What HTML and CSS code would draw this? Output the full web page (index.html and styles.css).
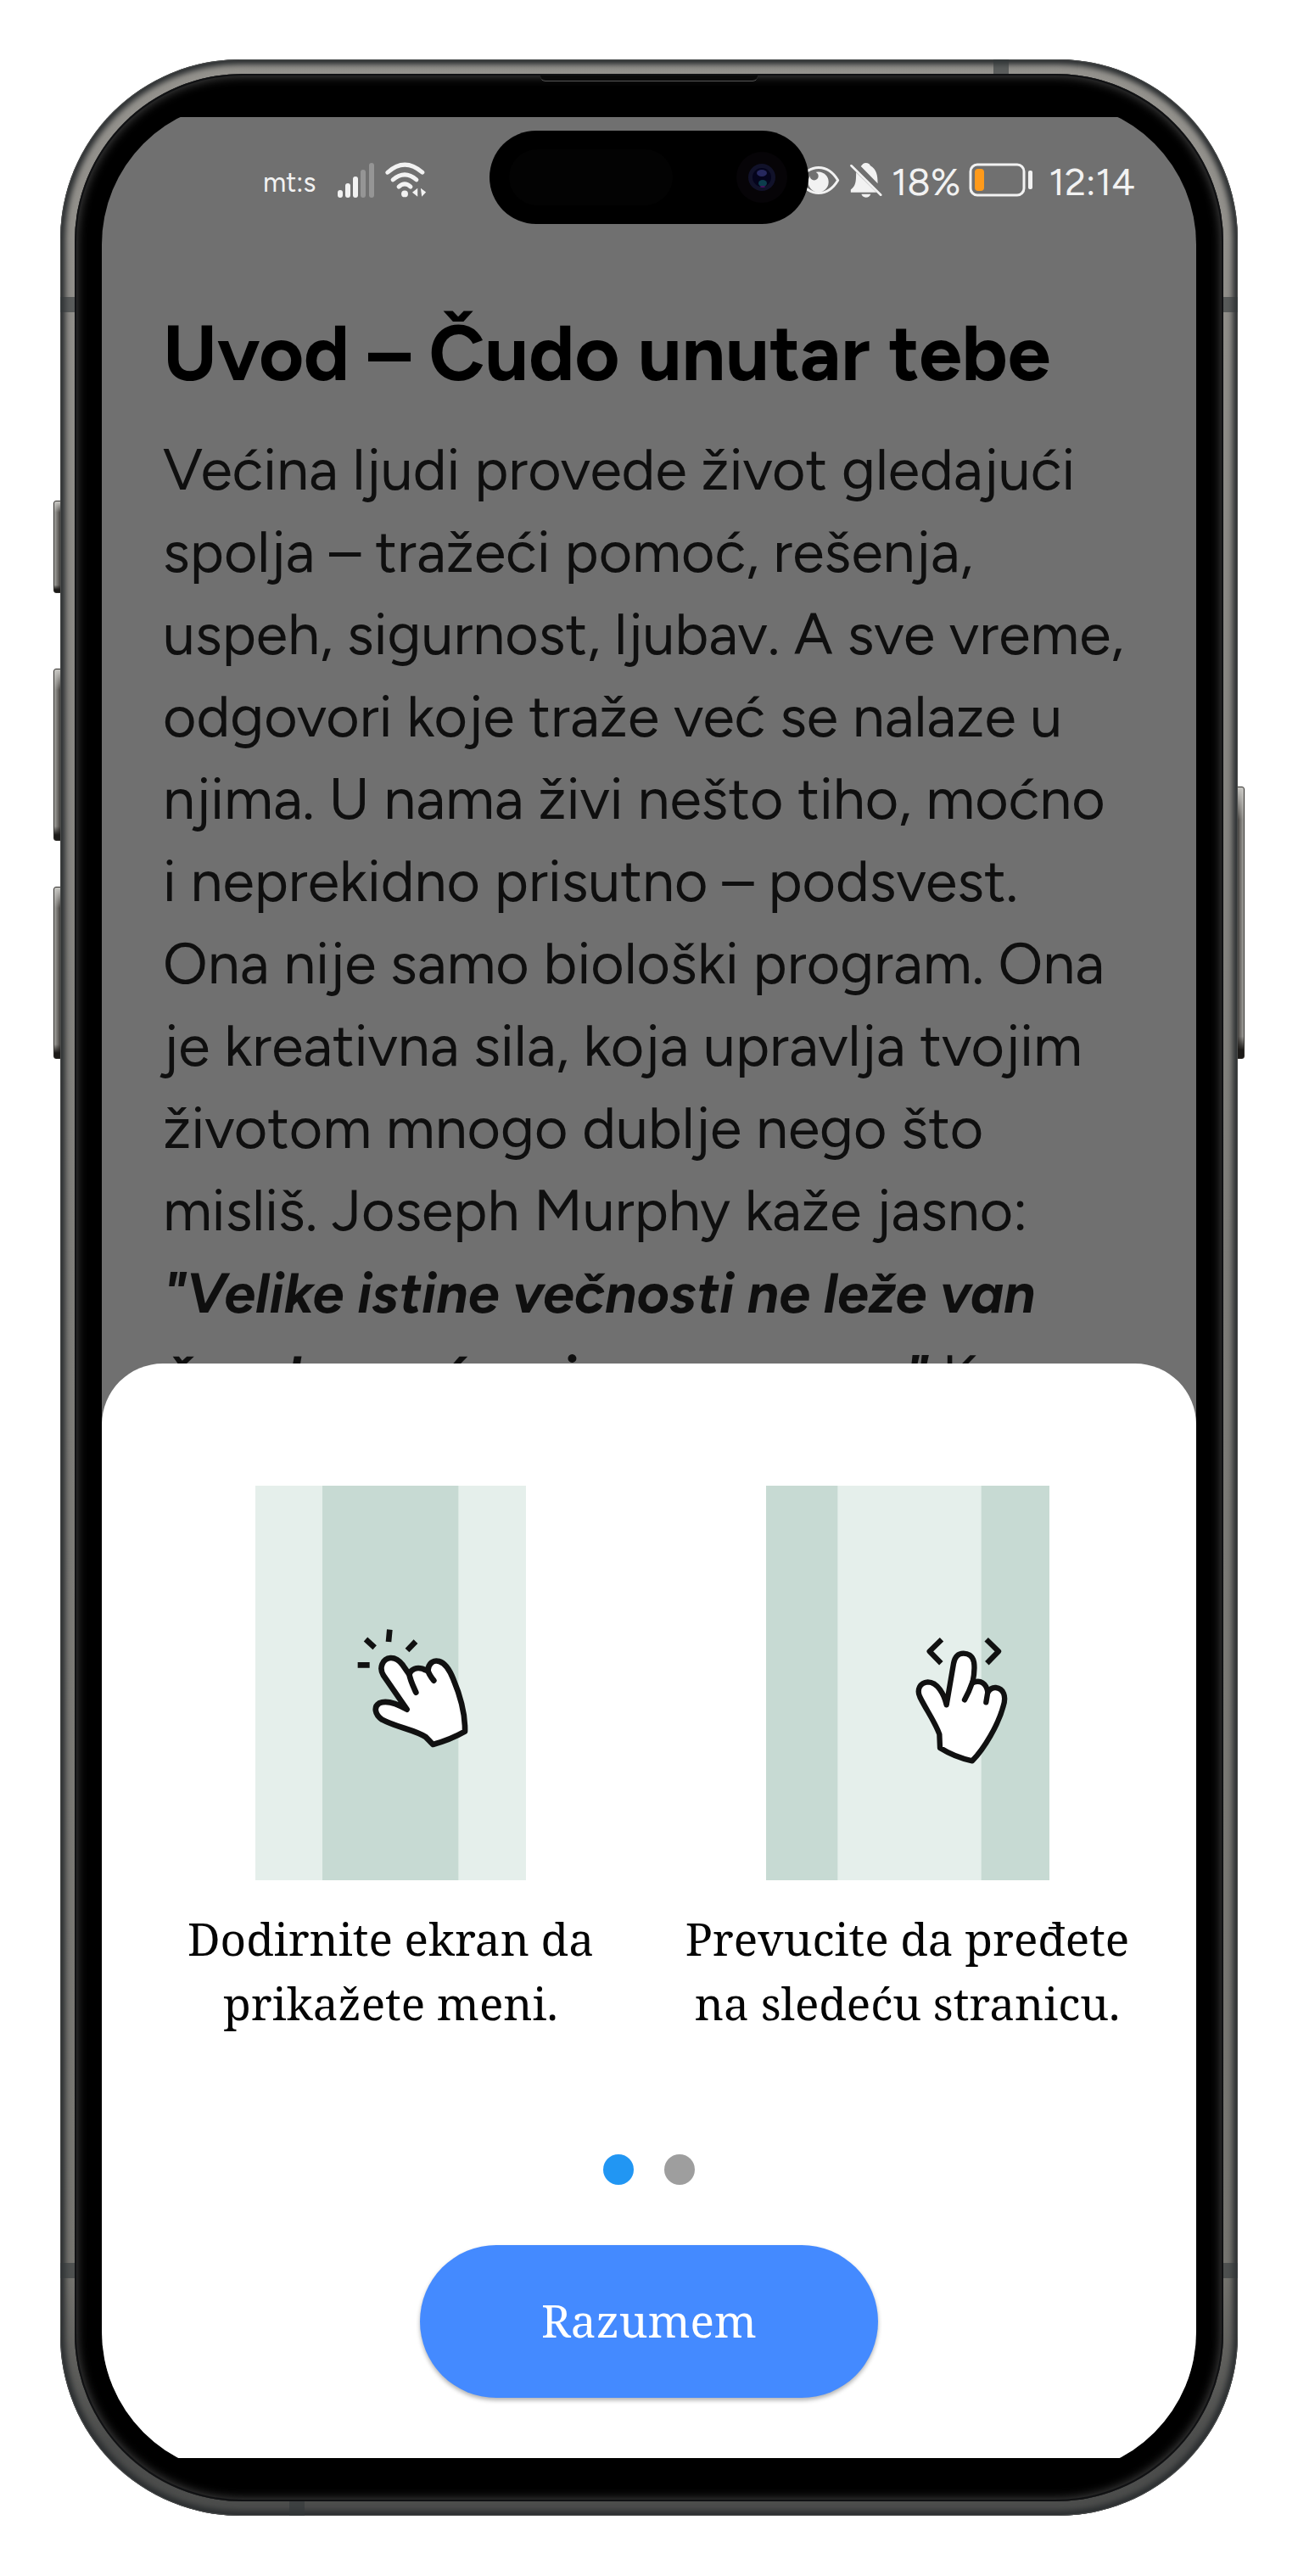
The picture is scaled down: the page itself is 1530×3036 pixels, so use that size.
FILE: index.html
```html
<!DOCTYPE html>
<html lang="sr-Latn">
<head>
<meta charset="utf-8">
<meta name="viewport" content="width=device-width, initial-scale=1">
<title>Uvod – Čudo unutar tebe</title>
<link rel="stylesheet" href="styles.css">
</head>
<body>
<main class="phone">
  <span class="key key-action"></span>
  <span class="key key-volume-up"></span>
  <span class="key key-volume-down"></span>
  <span class="key key-power"></span>
  <div class="frame">
    <span class="antenna antenna-left-top"></span>
    <span class="antenna antenna-right-top"></span>
    <span class="antenna antenna-left-bottom"></span>
    <span class="antenna antenna-right-bottom"></span>
    <span class="antenna antenna-top"></span>
    <span class="antenna antenna-bottom"></span>
    <div class="bezel">
      <span class="speaker"></span>
      <div class="glass">
        <div class="screen">
          <header class="status">
            <div class="status-group">
              <span class="carrier">mt:s</span>
              <svg class="signal" viewBox="0 0 44 41" aria-hidden="true">
                <g fill="#f2f2f2"><rect x="0" y="32" width="6" height="9" rx="3"/><rect x="9" y="24" width="6" height="17" rx="3"/><rect x="18" y="16" width="6" height="25" rx="3"/></g>
                <g fill="#959595"><rect x="27" y="8" width="6" height="33" rx="3"/><rect x="37" y="0" width="6" height="41" rx="3"/></g>
              </svg>
              <svg class="wifi" viewBox="1240 420 150 130" aria-hidden="true">
                <g fill="none" stroke="#f2f2f2" stroke-width="15" stroke-linecap="round"><path d="M1248 457Q1309 402 1372 457"/><path d="M1267 483Q1309 447 1351 483"/><path d="M1288 508Q1309 489 1330 508"/></g>
                <g fill="#f2f2f2"><circle cx="1309" cy="533" r="12"/><path d="M1336 528L1355 513V543ZM1366 513L1385 527L1370 543Z"/></g>
              </svg>
            </div>
            <div class="status-group status-group-end">
              <svg class="eye" viewBox="1140 400 150 110" aria-hidden="true">
                <path d="M1144 455C1180 395 1244 395 1280 455C1244 515 1180 515 1144 455Z" fill="none" stroke="#f2f2f2" stroke-width="9" stroke-linejoin="round"/>
                <circle cx="1211" cy="461" r="36" fill="#f2f2f2"/><circle cx="1196" cy="440" r="15" fill="#707070"/>
              </svg>
              <svg class="bell" viewBox="5 420 120 130" aria-hidden="true">
                <g fill="#f2f2f2"><path d="M29 456C29 490 28 505 10 518V528H102Z"/><path d="M46 435L54 426Q64 420 76 427L80 433C102 445 106 468 106 496Z"/><path d="M48 534H81C76 550 53 550 48 534Z"/></g>
                <path d="M12 433L117 537" stroke="#f2f2f2" stroke-width="8" stroke-linecap="round"/>
              </svg>
              <span class="level">18%</span>
              <svg class="battery" viewBox="0 0 76 40" aria-hidden="true">
                <rect x="2" y="2" width="63" height="36" rx="8" fill="none" stroke="#f2f2f2" stroke-width="3"/>
                <rect x="7" y="7" width="11" height="26" rx="4" fill="#ff9a1a"/>
                <rect x="70" y="9" width="5" height="22" rx="2" fill="#f2f2f2"/>
              </svg>
              <time class="clock">12:14</time>
            </div>
            <div class="island">
              <span class="sensor"></span>
              <svg class="camera" viewBox="0 0 60 60" aria-hidden="true">
                <circle cx="30" cy="30" r="30" fill="#060407"/><circle cx="30" cy="30" r="16" fill="#11122a"/><circle cx="30" cy="30" r="11" fill="#04041c"/>
                <ellipse cx="30" cy="25" rx="6" ry="4" fill="#26285e"/><ellipse cx="31" cy="37" rx="5" ry="4" fill="#0c3d4d"/><ellipse cx="31" cy="41" rx="3" ry="1" fill="#4a1060"/>
              </svg>
            </div>
          </header>
          <article class="reader">
            <h1>Uvod – Čudo unutar tebe</h1>
            <p>Većina ljudi provede život gledajući<br>spolja – tražeći pomoć, rešenja,<br>uspeh, sigurnost, ljubav. A sve vreme,<br>odgovori koje traže već se nalaze u<br>njima. U nama živi nešto tiho, moćno<br>i neprekidno prisutno – podsvest.<br>Ona nije samo biološki program. Ona<br>je kreativna sila, koja upravlja tvojim<br>životom mnogo dublje nego što<br>misliš. Joseph Murphy kaže jasno:<br><em>"Velike istine večnosti ne leže van<br>čoveka, već u njemu samom."</em> Kao</p>
          </article>
          <section class="sheet">
            <div class="tips">
              <figure class="tip">
                <svg class="tip-tap" viewBox="62 91 957 1395" aria-hidden="true">
                  <rect x="62" y="91" width="957" height="1395" fill="#e5efeb"/><rect x="299" y="91" width="481" height="1395" fill="#c7dad3"/>
                  <g stroke="#111" stroke-width="20" stroke-linejoin="round" fill="none">
                    <path fill="#fff" d="M598 882L515 762C498 735 512 702 540 700C560 699 572 710 583 725L606 758C612 740 632 732 652 738C660 741 668 745 672 745C674 720 690 706 712 712C735 718 750 745 762 775C785 830 805 890 803 960Q750 990 690 1006L665 980C630 955 560 945 510 918C484 900 480 872 500 860C530 846 570 866 598 882Z"/>
                    <path stroke-linecap="round" d="M606 755C608 775 620 800 630 822M672 742C674 755 685 770 693 780"/>
                    <path d="M424 725H466M452 634L484 663M537 600L533 643M629 642L599 673"/>
                  </g>
                </svg>
                <figcaption>Dodirnite ekran da<br>prikažete meni.</figcaption>
              </figure>
              <figure class="tip">
                <svg class="tip-swipe" viewBox="68 91 1002 1395" aria-hidden="true">
                  <rect x="68" y="91" width="1002" height="1395" fill="#c7dad3"/><rect x="321" y="91" width="508" height="1395" fill="#e5efeb"/>
                  <g stroke="#111" stroke-width="19" stroke-linejoin="round" fill="none">
                    <path fill="#fff" d="M706 866C698 830 675 785 640 785C612 787 600 812 612 838C635 885 665 925 681 970L683 1018C718 1040 755 1055 797 1064C840 1020 890 935 907 870C918 835 908 808 880 805C865 804 858 812 852 822C848 790 825 775 798 788C803 765 806 735 803 715C798 690 780 684 766 684C745 684 735 698 731 720C722 770 714 820 706 866Z"/>
                    <path stroke-linecap="round" d="M798 785Q786 820 770 848M853 815L846 857"/>
                    <path d="M689 635L646 677L687 719M847 635L890 677L849 719"/>
                  </g>
                </svg>
                <figcaption>Prevucite da pređete<br>na sledeću stranicu.</figcaption>
              </figure>
            </div>
            <nav class="dots" aria-label="Koraci">
              <button class="dot dot-active" type="button" aria-label="1"></button>
              <button class="dot" type="button" aria-label="2"></button>
            </nav>
            <button class="confirm" type="button">Razumem</button>
          </section>
        </div>
      </div>
    </div>
  </div>
</main>
</body>
</html>
```
FILE: styles.css
```css
* { box-sizing: border-box; }

body {
  margin: 0;
  padding: 70px 71px 71px;
  background: #fff;
  font-family: "Figtree", "Inter", "Liberation Sans", sans-serif;
}

.phone { position: relative; }

/* Metal body */
.frame {
  position: relative;
  padding: 17px;
  border-radius: 212px;
  background: linear-gradient(#94928d, #7d7c78 50%, #75746f 90%, #4c4d4c 97%);
  box-shadow: inset 0 0 0 1px #4a4c4c, inset 0 0 6px 6px #2c2f31;
}

.key {
  position: absolute;
  width: 9px;
  border: 1px solid #33312e;
  border-radius: 3px 0 0 3px;
  background: linear-gradient(to bottom, #c9c8c4, transparent 12%, transparent 92%, #1c1a18 97%), linear-gradient(to right, #a5a4a0, #45423f);
}
.key-action { left: -8px; top: 520px; height: 109px; }
.key-volume-up { left: -8px; top: 718px; height: 203px; }
.key-volume-down { left: -8px; top: 975px; height: 203px; }
.key-power { right: -8px; top: 857px; height: 321px; transform: scaleX(-1); }

.antenna { position: absolute; background: rgba(52, 56, 59, .6); }
.antenna-left-top, .antenna-left-bottom { left: 0; width: 17px; height: 18px; }
.antenna-right-top, .antenna-right-bottom { right: 0; width: 17px; height: 18px; }
.antenna-left-top, .antenna-right-top { top: 280px; }
.antenna-left-bottom, .antenna-right-bottom { bottom: 280px; }
.antenna-top { top: 0; right: 270px; width: 18px; height: 17px; }
.antenna-bottom { bottom: 0; left: 270px; width: 18px; height: 17px; }

.bezel {
  position: relative;
  padding: 33px 32px 32px;
  border-radius: 198px;
  background: #000;
  box-shadow: inset 0 0 0 2px #101113, inset 0 0 12px 3px #444;
}

.speaker {
  position: absolute;
  top: 2px;
  left: calc(50% - 128px);
  width: 256px;
  height: 7px;
  border-bottom: 1px solid #555;
  border-radius: 0 0 6px 6px;
  background: #0a0a0a;
}

.glass {
  padding: 18px 0 19px;
  border-radius: 168px;
  background: #000;
  overflow: hidden;
}

.screen {
  display: flex;
  flex-direction: column;
  background: #707070;
}

/* Status bar */
.status {
  position: relative;
  display: flex;
  justify-content: space-between;
  align-items: center;
  height: 148px;
  padding: 0 72px 0 190px;
  color: #f2f2f2;
}
.status-group { display: flex; align-items: center; gap: 12px; }
.status-group-end { gap: 10px; }
.carrier { margin-right: 14px; padding-top: 6px; font-size: 32px; line-height: 40px; }
.level, .clock { padding-top: 4px; font-size: 45px; line-height: 52px; }
.clock { margin-left: 8px; }
.signal { width: 44px; height: 41px; }
.wifi { width: 50px; height: 43px; }
.eye { width: 50px; height: 37px; }
.bell { width: 40px; height: 43px; }
.battery { width: 76px; height: 40px; }

.island {
  position: absolute;
  top: 16px;
  left: calc(50% - 188px);
  display: flex;
  align-items: center;
  justify-content: space-between;
  width: 376px;
  height: 110px;
  padding: 0 25px 0 23px;
  border-radius: 55px;
  background: #000;
}
.sensor { width: 193px; height: 66px; border-radius: 33px; background: #030303; }
.camera { width: 60px; height: 60px; }

/* Book page */
.reader { padding: 77px 72px 0; white-space: nowrap; }
.reader h1 { margin: 0 0 34px; color: #000; font-size: 91px; font-weight: 700; line-height: 108px; }
.reader p { margin: 0; color: #0f0f0f; font-size: 68px; line-height: 97px; }
.reader em { font-size: 66px; font-weight: 700; }

/* Gesture help */
.sheet {
  position: relative;
  display: flex;
  flex-direction: column;
  align-items: center;
  margin-top: -64px;
  padding: 144px 36px 71px;
  border-radius: 72px 72px 0 0;
  background: #fff;
  color: #050505;
  font-family: "Noto Serif", "Liberation Serif", serif;
  font-size: 53px;
}
.tips { display: grid; grid-template-columns: 1fr 1fr; width: 100%; }
.tip { display: flex; flex-direction: column; align-items: center; gap: 31px; margin: 0; }
.tip-tap { width: 319px; height: 465px; }
.tip-swipe { width: 334px; height: 465px; }
.tip figcaption { line-height: 76px; text-align: center; white-space: nowrap; }

.dots { display: flex; gap: 36px; margin-top: 140px; }
.dot { width: 36px; height: 36px; padding: 0; border: 0; border-radius: 50%; background: #9e9e9e; }
.dot-active { background: #2196f3; }

.confirm {
  width: 540px;
  height: 180px;
  margin-top: 71px;
  padding: 0 0 4px;
  border: 0;
  border-radius: 90px;
  background: #448aff;
  box-shadow: 0 3px 5px rgba(0, 0, 0, .3);
  color: #fff;
  font: inherit;
}
```
